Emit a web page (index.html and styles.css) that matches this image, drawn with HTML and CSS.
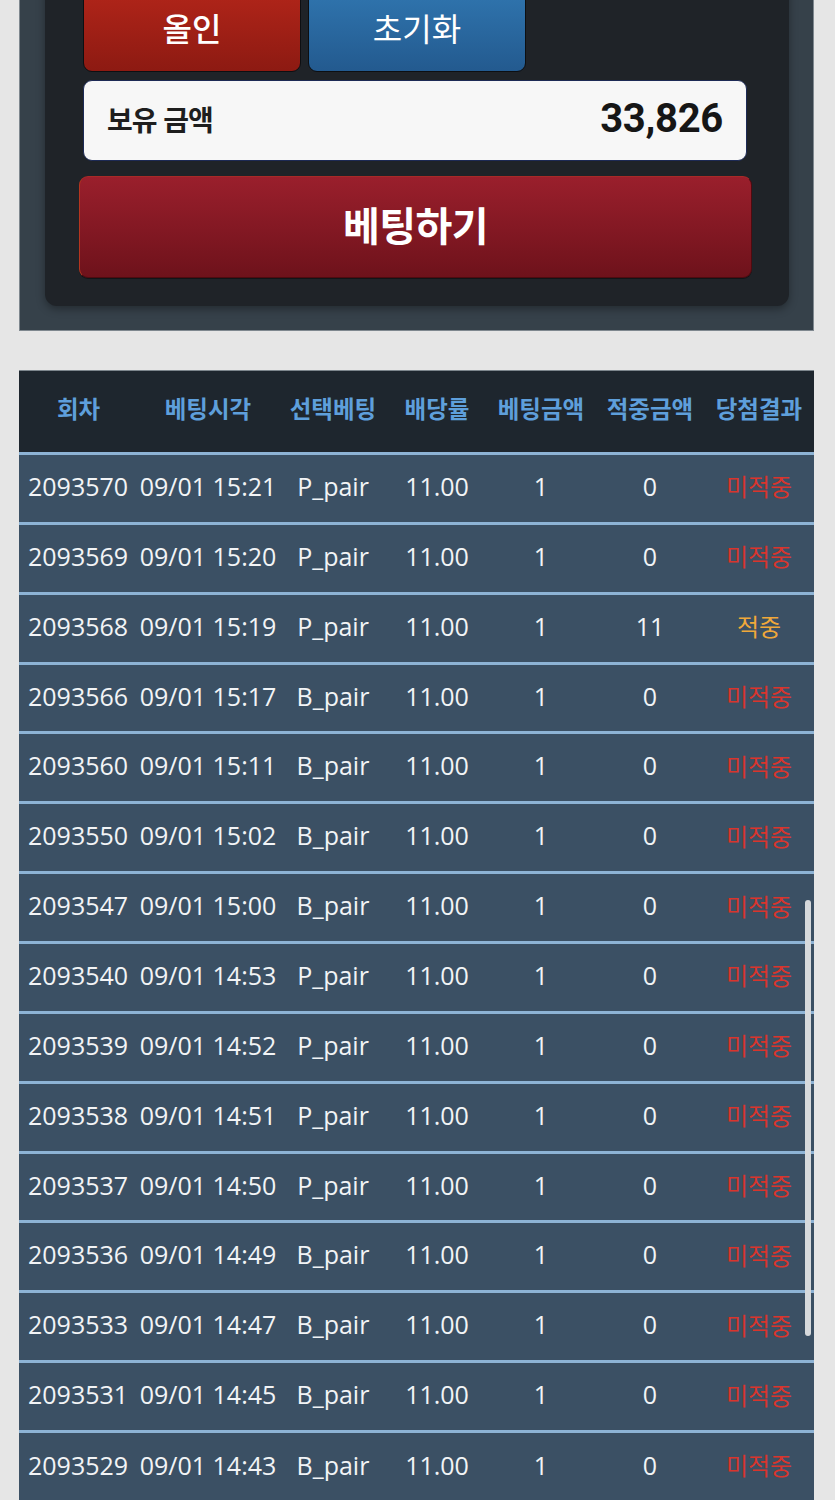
FILE: index.html
```html
<!DOCTYPE html>
<html lang="ko">
<head>
<meta charset="utf-8">
<link rel="stylesheet" href="styles.css">
</head>
<body>
<div class="page">
  <section class="panel">
    <div class="card">
      <div class="btn-row">
        <button class="btn btn-red">올인</button>
        <button class="btn btn-blue">초기화</button>
      </div>
      <div class="balance">
        <span class="balance-label">보유 금액</span>
        <span class="balance-value">33,826</span>
      </div>
      <button class="bet-btn">베팅하기</button>
    </div>
  </section>

  <table class="history">
    <colgroup>
      <col class="c1"><col class="c2"><col class="c3"><col class="c4"><col class="c5"><col class="c6"><col class="c7">
    </colgroup>
    <thead>
      <tr><th>회차</th><th>베팅시각</th><th>선택베팅</th><th>배당률</th><th>베팅금액</th><th>적중금액</th><th>당첨결과</th></tr>
    </thead>
    <tbody>
      <tr><td>2093570</td><td>09/01 15:21</td><td>P_pair</td><td>11.00</td><td>1</td><td>0</td><td class="lose">미적중</td></tr>
      <tr><td>2093569</td><td>09/01 15:20</td><td>P_pair</td><td>11.00</td><td>1</td><td>0</td><td class="lose">미적중</td></tr>
      <tr><td>2093568</td><td>09/01 15:19</td><td>P_pair</td><td>11.00</td><td>1</td><td>11</td><td class="win">적중</td></tr>
      <tr><td>2093566</td><td>09/01 15:17</td><td>B_pair</td><td>11.00</td><td>1</td><td>0</td><td class="lose">미적중</td></tr>
      <tr><td>2093560</td><td>09/01 15:11</td><td>B_pair</td><td>11.00</td><td>1</td><td>0</td><td class="lose">미적중</td></tr>
      <tr><td>2093550</td><td>09/01 15:02</td><td>B_pair</td><td>11.00</td><td>1</td><td>0</td><td class="lose">미적중</td></tr>
      <tr><td>2093547</td><td>09/01 15:00</td><td>B_pair</td><td>11.00</td><td>1</td><td>0</td><td class="lose">미적중</td></tr>
      <tr><td>2093540</td><td>09/01 14:53</td><td>P_pair</td><td>11.00</td><td>1</td><td>0</td><td class="lose">미적중</td></tr>
      <tr><td>2093539</td><td>09/01 14:52</td><td>P_pair</td><td>11.00</td><td>1</td><td>0</td><td class="lose">미적중</td></tr>
      <tr><td>2093538</td><td>09/01 14:51</td><td>P_pair</td><td>11.00</td><td>1</td><td>0</td><td class="lose">미적중</td></tr>
      <tr><td>2093537</td><td>09/01 14:50</td><td>P_pair</td><td>11.00</td><td>1</td><td>0</td><td class="lose">미적중</td></tr>
      <tr><td>2093536</td><td>09/01 14:49</td><td>B_pair</td><td>11.00</td><td>1</td><td>0</td><td class="lose">미적중</td></tr>
      <tr><td>2093533</td><td>09/01 14:47</td><td>B_pair</td><td>11.00</td><td>1</td><td>0</td><td class="lose">미적중</td></tr>
      <tr><td>2093531</td><td>09/01 14:45</td><td>B_pair</td><td>11.00</td><td>1</td><td>0</td><td class="lose">미적중</td></tr>
      <tr><td>2093529</td><td>09/01 14:43</td><td>B_pair</td><td>11.00</td><td>1</td><td>0</td><td class="lose">미적중</td></tr>
    </tbody>
  </table>
</div>
<div class="scroll-thumb"></div>
</body>
</html>
```

FILE: styles.css
```css
html, body {
  margin: 0;
  padding: 0;
  background: #e6e6e6;
  overflow: hidden;
}

body {
  font-family: "Noto Sans CJK KR", "Noto Sans", sans-serif;
}

.page {
  padding: 0 21px 0 19px;
  margin-top: -46px;
}

.panel {
  background: #36414a;
  border: 1px solid #7f888f;
  padding: 26px 24px 24px 25px;
}

.card {
  background: #1f2328;
  border-radius: 12px;
  box-shadow: 0 3px 8px rgba(0, 0, 0, 0.35);
  padding: 0 37px 28px 34px;
  display: flex;
  flex-direction: column;
}

.btn-row {
  display: flex;
  gap: 7px;
  padding-left: 4px;
}

.btn {
  width: 218px;
  height: 91px;
  border: 1.5px solid #0d0f12;
  border-radius: 9px;
  color: #ffffff;
  font-family: "Noto Sans CJK KR", sans-serif;
  font-size: 32px;
  font-weight: 500;
  padding: 0;
  line-height: 1;
}

.btn-red {
  background: linear-gradient(#b5261a, #8d1a12);
}

.btn-blue {
  background: linear-gradient(#3178b2, #235a8f);
  font-weight: 400;
}

.balance {
  margin: 8px 5px 0 4px;
  height: 81px;
  box-sizing: border-box;
  background: #f7f7f7;
  border: 1px solid #1d2a55;
  border-radius: 9px;
  display: flex;
  align-items: center;
  justify-content: space-between;
  padding: 0 23px 4px 23px;
}

.balance-label {
  font-size: 28px;
  font-weight: 700;
  color: #1e1e1e;
  letter-spacing: -1px;
}

.balance-value {
  font-family: Roboto, "Liberation Sans", sans-serif;
  font-size: 40px;
  font-weight: 700;
  color: #161616;
  letter-spacing: -0.3px;
}

.bet-btn {
  margin-top: 15px;
  height: 102px;
  border: 1px solid #4f0b10;
  border-left-color: #b4351f;
  border-top-color: #a82a27;
  border-radius: 9px;
  background: linear-gradient(#9a1f2c, #6e121b);
  color: #ffffff;
  font-family: "Noto Sans CJK KR", sans-serif;
  font-size: 40px;
  font-weight: 700;
  letter-spacing: -0.5px;
  padding: 0 0 6px;
  box-shadow: 0 1px 0 rgba(0, 0, 0, 0.4);
}

.history {
  margin-top: 39px;
  width: 795px;
  table-layout: fixed;
  border-collapse: collapse;
  border-top: 1px solid #7d868d;
}

.c1 { width: 119px; }
.c2 { width: 140px; }
.c3 { width: 110px; }
.c4 { width: 98px; }
.c5 { width: 110px; }
.c6 { width: 108px; }
.c7 { width: 110px; }

.history th {
  background: #1e262e;
  color: #5e9fdb;
  font-size: 23.5px;
  font-weight: 700;
  height: 73px;
  padding: 0 0 8px;
  letter-spacing: 0;
  white-space: nowrap;
}

.history td {
  background: #3b5064;
  border-top: 3px solid #8db3d5;
  height: 69.86px;
  padding: 0 0 5px;
  text-align: center;
  color: #f2f4f6;
  font-family: "Open Sans", "Noto Sans CJK KR", sans-serif;
  font-size: 25px;
  white-space: nowrap;
  box-sizing: border-box;
}

.history td:first-child {
  text-align: left;
  padding-left: 9px;
}

.history td.lose {
  color: #d8352d;
  font-family: "Noto Sans CJK KR", sans-serif;
  font-size: 24px;
}

.history td.win {
  color: #f0a83a;
  font-family: "Noto Sans CJK KR", sans-serif;
  font-size: 24px;
}

.scroll-thumb {
  position: absolute;
  left: 805px;
  top: 900px;
  width: 6px;
  height: 436px;
  border-radius: 3px;
  background: #d6d9dc;
}
```
